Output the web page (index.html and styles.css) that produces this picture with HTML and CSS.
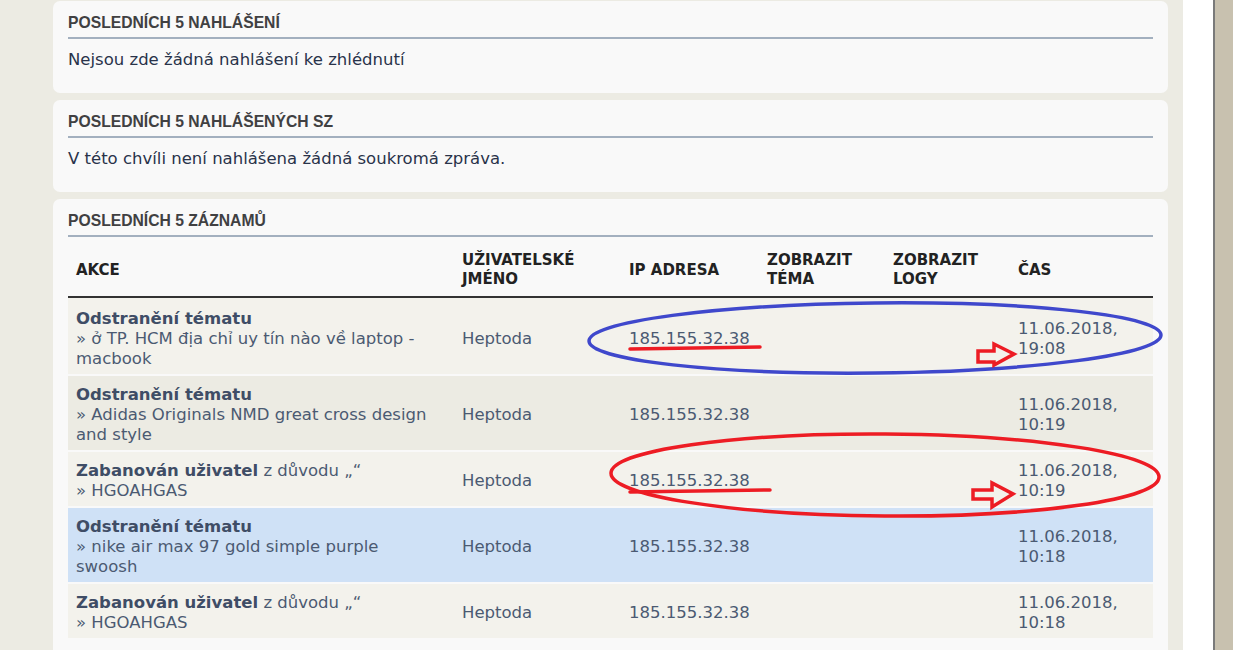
FILE: index.html
```html
<!DOCTYPE html>
<html lang="cs">
<head>
  <meta charset="UTF-8" />
  <meta name="viewport" content="width=device-width, initial-scale=1.0" />
  <title>Administrace - úvod</title>
  <link rel="stylesheet" href="styles.css">
</head>
<body>
  <div class="page">
    <div class="content">
      <div class="panel">
        <h3>Posledních 5 nahlášení</h3>
        <p>Nejsou zde žádná nahlášení ke zhlédnutí</p>
      </div>

      <div class="panel">
        <h3>Posledních 5 nahlášených SZ</h3>
        <p>V této chvíli není nahlášena žádná soukromá zpráva.</p>
      </div>

      <div class="panel">
        <h3>Posledních 5 záznamů</h3>
        <table class="logs">
          <colgroup>
            <col class="c-action">
            <col class="c-user">
            <col class="c-ip">
            <col class="c-topic">
            <col class="c-logs">
            <col class="c-time">
          </colgroup>
          <thead>
            <tr>
              <th>Akce</th>
              <th>Uživatelské jméno</th>
              <th>IP adresa</th>
              <th>Zobrazit téma</th>
              <th>Zobrazit logy</th>
              <th>Čas</th>
            </tr>
          </thead>
          <tbody>
            <tr class="bg1">
              <td class="action"><strong>Odstranění tématu</strong><br>» ở TP. HCM địa chỉ uy tín nào về laptop - macbook</td>
              <td>Heptoda</td>
              <td>185.155.32.38</td>
              <td></td>
              <td></td>
              <td>11.06.2018, 19:08</td>
            </tr>
            <tr class="bg2">
              <td class="action"><strong>Odstranění tématu</strong><br>» Adidas Originals NMD great cross design and style</td>
              <td>Heptoda</td>
              <td>185.155.32.38</td>
              <td></td>
              <td></td>
              <td>11.06.2018, 10:19</td>
            </tr>
            <tr class="bg1">
              <td class="action"><strong>Zabanován uživatel</strong> z důvodu „“<br>» HGOAHGAS</td>
              <td>Heptoda</td>
              <td>185.155.32.38</td>
              <td></td>
              <td></td>
              <td>11.06.2018, 10:19</td>
            </tr>
            <tr class="bg3">
              <td class="action"><strong>Odstranění tématu</strong><br>» nike air max 97 gold simple purple swoosh</td>
              <td>Heptoda</td>
              <td>185.155.32.38</td>
              <td></td>
              <td></td>
              <td>11.06.2018, 10:18</td>
            </tr>
            <tr class="bg1">
              <td class="action"><strong>Zabanován uživatel</strong> z důvodu „“<br>» HGOAHGAS</td>
              <td>Heptoda</td>
              <td>185.155.32.38</td>
              <td></td>
              <td></td>
              <td>11.06.2018, 10:18</td>
            </tr>
          </tbody>
        </table>
      </div>
    </div>
    <div class="gutter"></div>
    <div class="scrollbar"></div>
  </div>

  <!-- ruční poznámky přes screenshot -->
  <svg class="marks" width="1233" height="650" viewBox="0 0 1233 650">
    <ellipse class="blue" cx="875" cy="338" rx="286" ry="35" transform="rotate(-0.6 875 338)" />
    <line class="red" x1="630" y1="349" x2="760" y2="347" />
    <polygon class="red" points="978,351 994,351 994,344 1014,354 994,365 994,362 978,362" />

    <ellipse class="red" cx="885" cy="475" rx="274" ry="41" transform="rotate(0.4 885 475)" />
    <line class="red" x1="630" y1="492" x2="770" y2="490" />
    <polygon class="red" points="973,490 992,490 992,483 1013,494 992,507 992,499 973,499" />
  </svg>
</body>
</html>
```

FILE: styles.css
```css
body {
  margin: 0;
  padding: 0;
  background: #ffffff;
  font-family: "DejaVu Sans", Verdana, sans-serif;
  overflow: hidden;
}
.page {
  display: flex;
  min-height: 100vh;
}
.content {
  flex: 0 0 1183px;
  box-sizing: border-box;
  padding: 1px 15px 0 53px;
  background: #ecebe3;
}
.gutter {
  flex: 0 0 30px;
  background: #ffffff;
}
.scrollbar {
  flex: 1;
  background: #c8c1af;
  border-left: 2px solid #7a7a7a;
}
.panel {
  background: #f9f9f9;
  border-radius: 7px;
  padding: 13px 15px 23px;
  margin-bottom: 7px;
}
.panel h3 {
  margin: 0;
  font-family: "Liberation Sans", Arial, sans-serif;
  font-size: 15.7px;
  line-height: 18px;
  font-weight: bold;
  text-transform: uppercase;
  color: #404042;
  padding-bottom: 5px;
  border-bottom: 2px solid #a3b0bf;
}
.panel p {
  margin: 11px 0 0;
  font-size: 16.5px;
  line-height: 20px;
  color: #29334a;
}
.logs {
  width: 100%;
  margin-top: 1px;
  table-layout: fixed;
  border-collapse: separate;
  border-spacing: 0;
}
.c-action { width: 386px; }
.c-user { width: 167px; }
.c-ip { width: 138px; }
.c-topic { width: 126px; }
.c-logs { width: 125px; }
.c-time { width: 143px; }
.logs th {
  text-align: left;
  vertical-align: middle;
  padding: 13px 8px 7px;
  font-size: 15px;
  line-height: 19px;
  font-weight: bold;
  text-transform: uppercase;
  color: #222222;
  border-bottom: 2px solid #333333;
}
.logs td {
  padding: 9px 8px 5px;
  font-size: 16.5px;
  line-height: 20px;
  color: #4b5a72;
  vertical-align: middle;
  border-bottom: 2px solid #f9f9f9;
}
.logs tbody tr:first-child td {
  padding-top: 11px;
}
.logs td.action {
  padding-right: 16px;
}
.logs td strong {
  color: #3f4d66;
}
.bg1 td { background: #f3f2ec; }
.bg2 td { background: #ecebe3; }
.bg3 td { background: #cfe1f6; }
.marks {
  position: absolute;
  left: 0;
  top: 0;
  pointer-events: none;
}
.marks .blue {
  fill: none;
  stroke: #3f48cc;
  stroke-width: 3.5;
}
.marks .red {
  fill: none;
  stroke: #ed1c24;
  stroke-width: 3.5;
  stroke-linecap: round;
}
```
